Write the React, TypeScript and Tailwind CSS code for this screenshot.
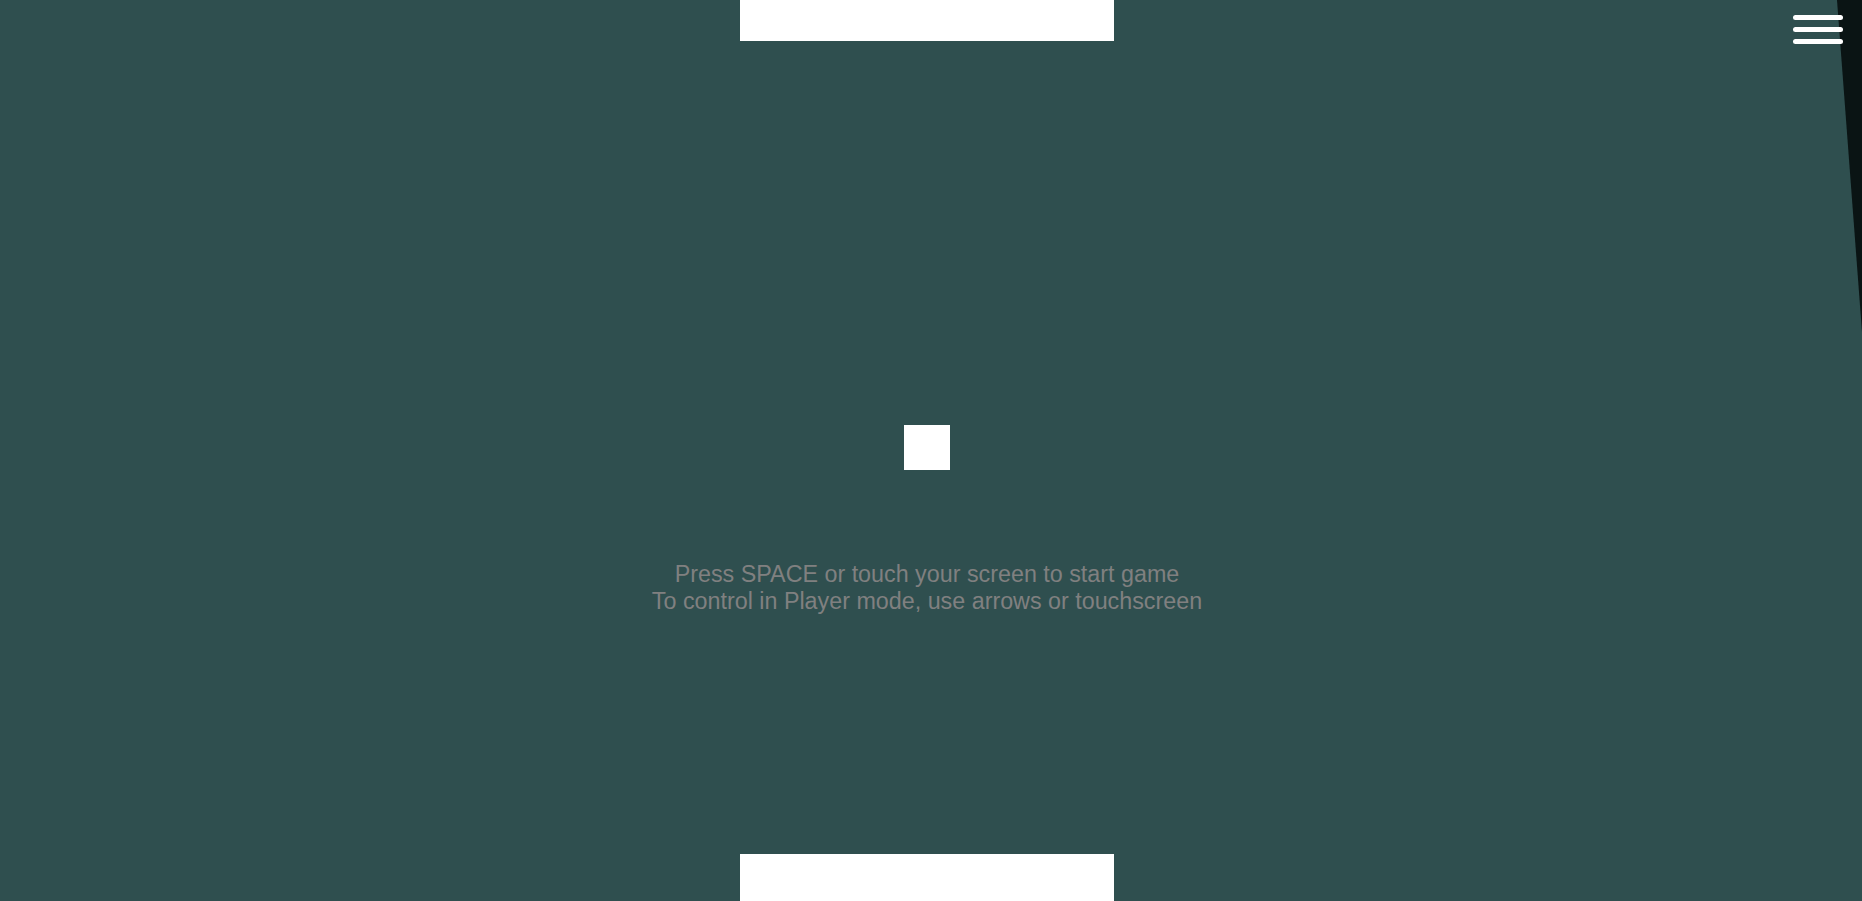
export default function App() {
  return (
    <div className="relative h-screen w-full overflow-hidden bg-[#2f4f4f] font-['Liberation_Sans',Arial,sans-serif]">
      <div className="flex h-full flex-col items-center pr-[8px]">
        <div className="h-[41px] w-[374px] shrink-0 bg-white" />
        <div className="mt-[384px] h-[45px] w-[46px] shrink-0 bg-white" />
        <div className="mt-[91px] text-center text-[23.3px] leading-[27px] text-[#808080]">
          <p>Press SPACE or touch your screen to start game</p>
          <p>To control in Player mode, use arrows or touchscreen</p>
        </div>
        <div className="mt-auto h-[47px] w-[374px] shrink-0 bg-white" />
      </div>

      {/* menu drawer edge peeking in from the right */}
      <svg className="absolute right-0 top-0" width="26" height="332" viewBox="0 0 26 332">
        <polygon points="1,0 26,0 26,332" fill="#0a1414" />
      </svg>

      <button className="absolute right-[19px] top-[15px] flex w-[50px] flex-col gap-[7px]">
        <span className="block h-[5px] w-full rounded-full bg-white" />
        <span className="block h-[5px] w-full rounded-full bg-white" />
        <span className="block h-[5px] w-full rounded-full bg-white" />
      </button>
    </div>
  );
}
